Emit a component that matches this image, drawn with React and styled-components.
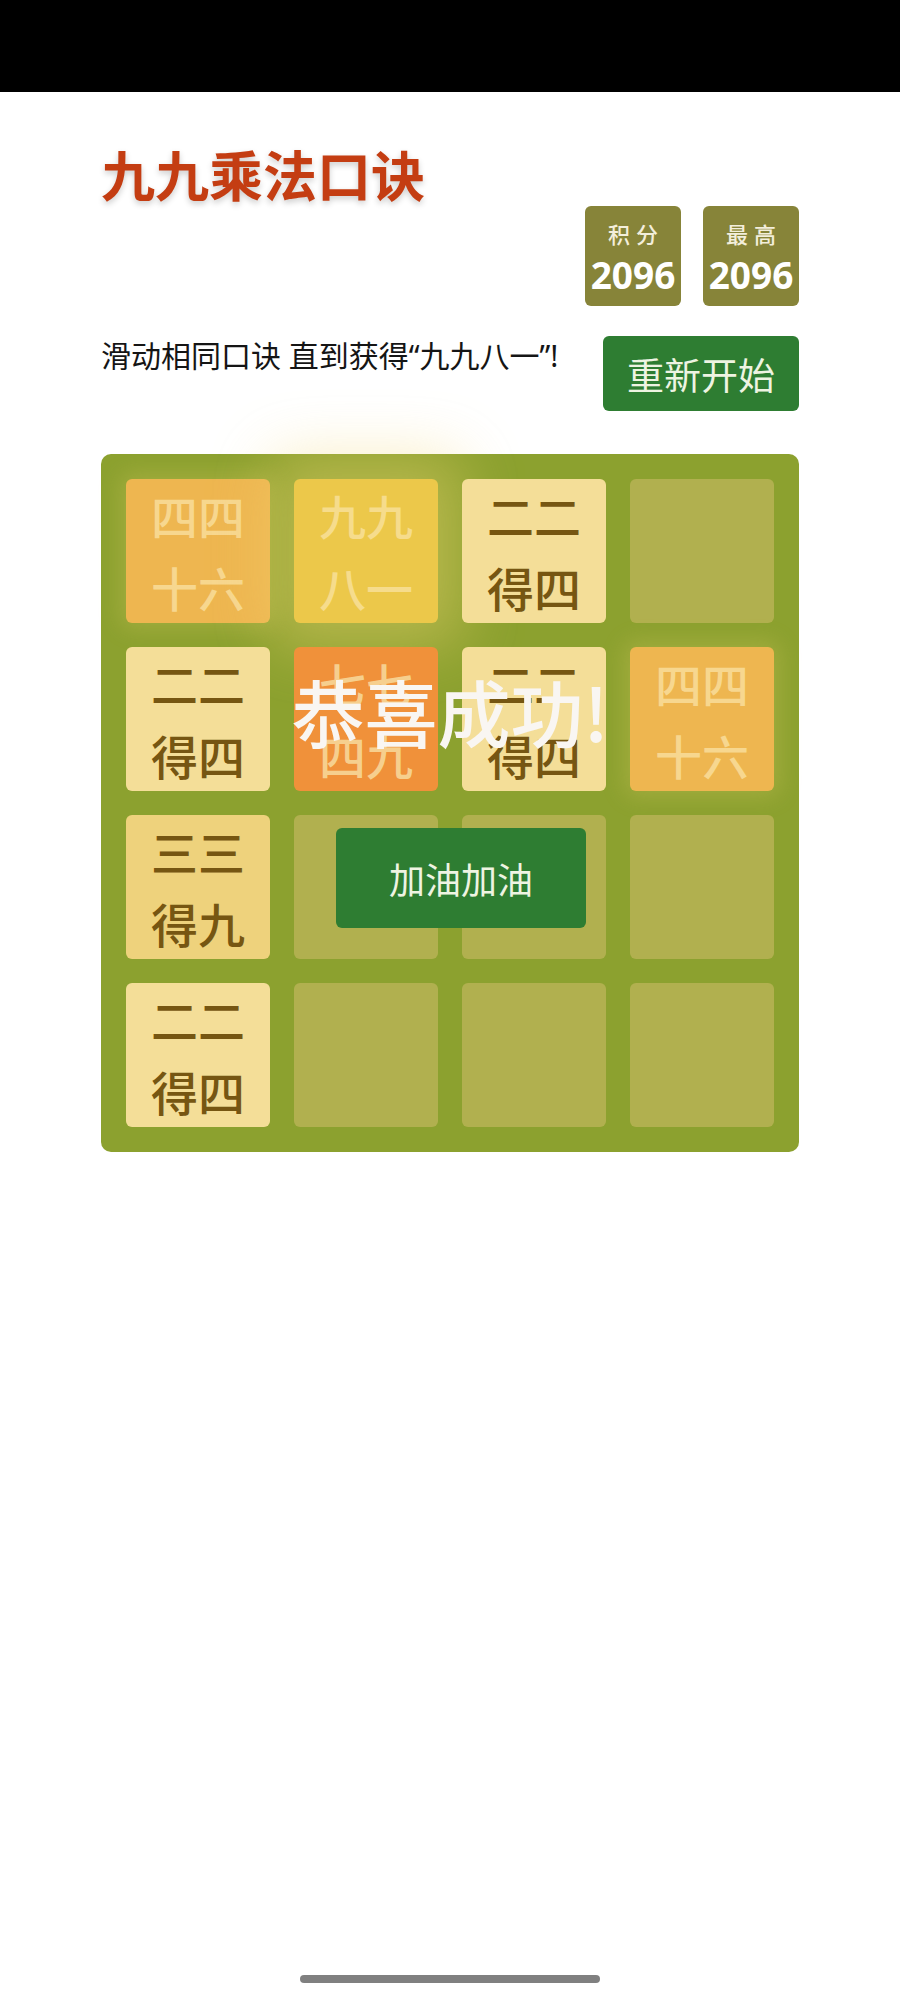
import React from "react";
import styled, { createGlobalStyle } from "styled-components";

const GlobalStyle = createGlobalStyle`
  html, body { margin: 0; padding: 0; background: #ffffff; }
  body { font-family: "Noto Sans", "Noto Sans CJK SC", sans-serif; }
  * { box-sizing: border-box; }
`;

const Page = styled.div`
  min-height: 2000px;
  display: flex;
  flex-direction: column;
  background: #ffffff;
`;

const StatusBar = styled.div`
  height: 92px;
  background: #000000;
  flex-shrink: 0;
`;

const Container = styled.div`
  width: 698px;
  margin-left: 101px;
  padding-top: 50px;
  display: flex;
  flex-direction: column;
`;

const Title = styled.h1`
  margin: 0;
  font-family: "Noto Sans CJK SC", sans-serif;
  font-size: 54px;
  line-height: 64px;
  font-weight: 700;
  color: #c43d12;
  text-shadow: 0 3px 6px rgba(0, 0, 0, 0.2);
`;

const ScoresRow = styled.div`
  display: flex;
  justify-content: flex-end;
  gap: 22px;
`;

const ScoreBox = styled.div`
  width: 96px;
  height: 100px;
  border-radius: 6px;
  background: #878439;
  display: flex;
  flex-direction: column;
  align-items: center;
  padding-top: 12px;
`;

const ScoreLabel = styled.div`
  font-family: "Noto Sans CJK SC", sans-serif;
  font-size: 22px;
  line-height: 30px;
  font-weight: 500;
  letter-spacing: 6px;
  margin-right: -6px;
  color: #f3eedb;
`;

const ScoreValue = styled.div`
  font-family: "Noto Sans", "Open Sans", sans-serif;
  font-size: 37px;
  line-height: 46px;
  font-weight: 700;
  margin-top: 4px;
  color: #ffffff;
`;

const IntroRow = styled.div`
  margin-top: 30px;
  display: flex;
  justify-content: space-between;
  align-items: flex-start;
`;

const Intro = styled.p`
  margin: 0;
  font-family: "Noto Sans", "Noto Sans CJK SC", sans-serif;
  font-size: 30px;
  line-height: 40px;
  font-weight: 400;
  color: #151515;
`;

const GreenButton = styled.button`
  border: none;
  border-radius: 6px;
  background: #2e7d32;
  color: #eef4e2;
  font-family: "Noto Sans CJK SC", sans-serif;
  font-size: ${(p) => p.$fs}px;
  font-weight: 400;
  padding: 0;
  width: ${(p) => p.$w}px;
  height: ${(p) => p.$h}px;
  display: flex;
  align-items: center;
  justify-content: center;
  cursor: pointer;
`;

const Board = styled.div`
  position: relative;
  margin-top: 43px;
  width: 698px;
  height: 698px;
  border-radius: 10px;
  background: #8ca12f;
  padding: 25px;
  display: grid;
  grid-template-columns: repeat(4, 1fr);
  grid-template-rows: repeat(4, 1fr);
  gap: 24px;
`;

const tileStyles = {
  empty: { bg: "#b1b04f", fg: "transparent", glow: "none" },
  t4: { bg: "#f4de98", fg: "#765612", glow: "none" },
  t9: { bg: "#eed27c", fg: "#765612", glow: "none" },
  t16: {
    bg: "#eeb650",
    fg: "#f7d78f",
    glow: "0 0 22px 6px rgba(243, 215, 116, 0.22)",
  },
  t49: { bg: "#f0913a", fg: "#f6cf8e", glow: "none" },
  t81: {
    bg: "#ecc84a",
    fg: "#f6dc8c",
    glow: "0 0 60px 24px rgba(243, 215, 116, 0.42)",
  },
};

const Tile = styled.div`
  border-radius: 6px;
  background: ${(p) => tileStyles[p.$kind].bg};
  color: ${(p) => tileStyles[p.$kind].fg};
  box-shadow: ${(p) => tileStyles[p.$kind].glow};
  font-family: "Noto Sans CJK SC", sans-serif;
  font-size: 47px;
  line-height: 72px;
  font-weight: 500;
  display: flex;
  flex-direction: column;
  align-items: center;
  justify-content: center;
`;

const TileLine = styled.span`
  display: block;
  height: 72px;
`;

const Overlay = styled.div`
  position: absolute;
  inset: 0;
  border-radius: 10px;
  display: flex;
  flex-direction: column;
  align-items: center;
`;

const WinText = styled.p`
  margin: 214px 0 0 0;
  font-family: "Noto Sans CJK SC", sans-serif;
  font-size: 73px;
  line-height: 84px;
  font-weight: 500;
  color: #f9f6f2;
`;

const ButtonWrap = styled.div`
  margin-top: 76px;
  margin-left: 22px;
`;

const Footer = styled.div`
  margin-top: auto;
  display: flex;
  justify-content: center;
  padding-bottom: 17px;
`;

const HomeIndicator = styled.div`
  width: 300px;
  height: 8px;
  border-radius: 4px;
  background: #808080;
`;

const tiles = [
  { kind: "t16", lines: ["四四", "十六"] },
  { kind: "t81", lines: ["九九", "八一"] },
  { kind: "t4", lines: ["二二", "得四"] },
  { kind: "empty", lines: [] },
  { kind: "t4", lines: ["二二", "得四"] },
  { kind: "t49", lines: ["七七", "四九"] },
  { kind: "t4", lines: ["二二", "得四"] },
  { kind: "t16", lines: ["四四", "十六"] },
  { kind: "t9", lines: ["三三", "得九"] },
  { kind: "empty", lines: [] },
  { kind: "empty", lines: [] },
  { kind: "empty", lines: [] },
  { kind: "t4", lines: ["二二", "得四"] },
  { kind: "empty", lines: [] },
  { kind: "empty", lines: [] },
  { kind: "empty", lines: [] },
];

export default function App() {
  return (
    <Page>
      <GlobalStyle />
      <StatusBar />
      <Container>
        <Title>九九乘法口诀</Title>
        <ScoresRow>
          <ScoreBox>
            <ScoreLabel>积分</ScoreLabel>
            <ScoreValue>2096</ScoreValue>
          </ScoreBox>
          <ScoreBox>
            <ScoreLabel>最高</ScoreLabel>
            <ScoreValue>2096</ScoreValue>
          </ScoreBox>
        </ScoresRow>
        <IntroRow>
          <Intro>滑动相同口诀 直到获得“九九八一”!</Intro>
          <GreenButton $w={196} $h={75} $fs={37}>重新开始</GreenButton>
        </IntroRow>
        <Board>
          {tiles.map((t, i) => (
            <Tile key={i} $kind={t.kind}>
              {t.lines.map((l, j) => (
                <TileLine key={j}>{l}</TileLine>
              ))}
            </Tile>
          ))}
          <Overlay>
            <WinText>恭喜成功!</WinText>
            <ButtonWrap>
              <GreenButton $w={250} $h={100} $fs={36}>加油加油</GreenButton>
            </ButtonWrap>
          </Overlay>
        </Board>
      </Container>
      <Footer>
        <HomeIndicator />
      </Footer>
    </Page>
  );
}
